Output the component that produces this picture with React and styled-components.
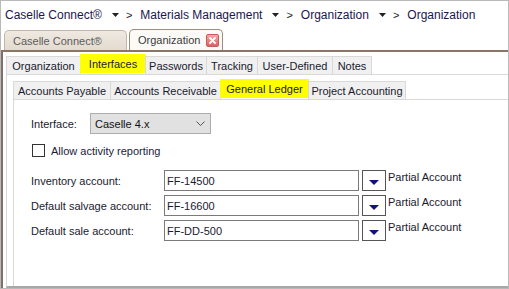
import React from 'react'
import styled, { createGlobalStyle } from 'styled-components'

const GlobalStyle = createGlobalStyle`
  html, body {
    margin: 0;
    padding: 0;
    background: #ffffff;
  }
  body {
    font-family: 'Liberation Sans', Arial, sans-serif;
    font-size: 11px;
    color: #1a1a1a;
  }
  * {
    box-sizing: border-box;
  }
`

const Frame = styled.div`
  width: 509px;
  height: 289px;
  border: 1px solid #b9b9b9;
  display: flex;
  flex-direction: column;
  background: #ffffff;
  overflow: hidden;
`

const Crumbs = styled.nav`
  height: 28px;
  flex: none;
  display: flex;
  align-items: center;
  padding-left: 4px;
  font-size: 12px;
  color: #1b1650;
`

const Crumb = styled.span`
  white-space: nowrap;
`

const Sep = styled.span`
  display: flex;
  align-items: center;
  gap: 7px;
  margin: 0 8px 0 10px;
  font-size: 11px;
  color: #222;
  svg {
    display: block;
  }
`

const DocTabs = styled.div`
  height: 21px;
  flex: none;
  display: flex;
  align-items: flex-end;
  gap: 2px;
  padding-left: 3px;
`

const DocTab = styled.div`
  height: ${(p) => (p.$active ? '21px' : '20px')};
  padding: 0 ${(p) => (p.$active ? '3px' : '8px')} 0 8px;
  display: flex;
  align-items: center;
  border: 1px solid ${(p) => (p.$active ? '#9c8c7c' : '#c2b6a8')};
  border-bottom: none;
  border-radius: 5px 5px 0 0;
  background: ${(p) =>
    p.$active ? '#fbfaf7' : 'linear-gradient(#efe9e1, #e3dbcf)'};
  color: ${(p) => (p.$active ? '#3a3a3a' : '#5c5c5c')};
  width: ${(p) => p.$w}px;
  white-space: nowrap;
`

const CloseBox = styled.span`
  width: 13px;
  height: 13px;
  border-radius: 2px;
  background: linear-gradient(#f2a6a6, #e06262);
  border: 1px solid #c65b5b;
  display: flex;
  align-items: center;
  justify-content: center;
  margin-left: auto;
`

const DocBody = styled.div`
  flex: 1;
  display: flex;
  flex-direction: column;
  border-top: 2px solid #8a7567;
  border-left: 2px solid #7f7069;
  padding: 2px 0 0 3px;
  min-height: 0;
`

const TabStrip = styled.div`
  display: flex;
  align-items: flex-end;
  height: ${(p) => p.$h}px;
  flex: none;
  border-bottom: 1px solid #d9d9d9;
`

const Tab = styled.div`
  height: ${(p) => (p.$active ? '19px' : '18px')};
  margin-bottom: ${(p) => (p.$active ? '1px' : '0')};
  display: flex;
  align-items: center;
  justify-content: center;
  width: ${(p) => p.$w}px;
  background: ${(p) => (p.$active ? '#ffff00' : '#f0f0f0')};
  border: 1px solid ${(p) => (p.$active ? '#ffff00' : '#d9d9d9')};
  border-bottom: none;
  margin-right: -1px;
  white-space: nowrap;
  color: #1a1a2e;
`

const Panel = styled.div`
  flex: 1;
  display: flex;
  flex-direction: column;
  border-left: 1px solid #d9d9d9;
  border-bottom: 2px solid #a8a8a8;
  padding: 6px 0 0 6px;
  min-height: 0;
`

const Content = styled.div`
  flex: 1;
  border-left: 1px solid #d9d9d9;
  padding: 13px 0 0 17px;
`

const Row = styled.div`
  display: flex;
  align-items: center;
  height: 21px;
  margin-bottom: 4px;
`

const Label = styled.span`
  width: ${(p) => p.$w}px;
  flex: none;
  color: #1a1a2e;
`

const Select = styled.div`
  width: 121px;
  height: 21px;
  border: 1px solid #adadad;
  background: #e1e1e1;
  display: flex;
  align-items: center;
  justify-content: space-between;
  padding: 0 5px 0 4px;
  color: #111;
`

const CheckRow = styled.label`
  display: flex;
  align-items: center;
  gap: 6px;
  margin: 10px 0 13px 1px;
  color: #1a1a3a;
`

const Check = styled.span`
  width: 13px;
  height: 13px;
  border: 1px solid #333;
  background: #fff;
`

const Input = styled.div`
  width: 195px;
  height: 21px;
  border: 1px solid #7a7a7a;
  display: flex;
  align-items: center;
  padding-left: 2px;
  color: #1a1a2e;
`

const DropBtn = styled.div`
  width: 24px;
  height: 21px;
  margin-left: 3px;
  border: 1px solid #555;
  display: flex;
  align-items: center;
  justify-content: center;
  padding-top: 4px;
  background: #fff;
`

const Hint = styled.span`
  align-self: flex-start;
  margin-left: 2px;
  margin-top: 1px;
  color: #1a1a2e;
`

const Caret = () => (
  <svg width='7' height='4' viewBox='0 0 7 4'>
    <path d='M0 0h7L3.5 4z' fill='#222' />
  </svg>
)

const accounts = [
  { label: 'Inventory account:', value: 'FF-14500' },
  { label: 'Default salvage account:', value: 'FF-16600' },
  { label: 'Default sale account:', value: 'FF-DD-500' },
]

const App = () => {
  return (
    <>
      <GlobalStyle />
      <Frame>
        <Crumbs>
          <Crumb>Caselle Connect®</Crumb>
          <Sep>
            <Caret />
            &gt;
          </Sep>
          <Crumb>Materials Management</Crumb>
          <Sep>
            <Caret />
            &gt;
          </Sep>
          <Crumb>Organization</Crumb>
          <Sep>
            <Caret />
            &gt;
          </Sep>
          <Crumb>Organization</Crumb>
        </Crumbs>
        <DocTabs>
          <DocTab $w={123}>Caselle Connect®</DocTab>
          <DocTab $active $w={94}>
            Organization
            <CloseBox>
              <svg width='7' height='7' viewBox='0 0 7 7'>
                <path
                  d='M1 1l5 5M6 1L1 6'
                  stroke='#fff'
                  strokeWidth='1.8'
                  strokeLinecap='round'
                />
              </svg>
            </CloseBox>
          </DocTab>
        </DocTabs>
        <DocBody>
          <TabStrip $h={21}>
            <Tab $w={75}>Organization</Tab>
            <Tab $active $w={66}>Interfaces</Tab>
            <Tab $w={62}>Passwords</Tab>
            <Tab $w={52}>Tracking</Tab>
            <Tab $w={76}>User-Defined</Tab>
            <Tab $w={40}>Notes</Tab>
          </TabStrip>
          <Panel>
            <TabStrip $h={19}>
              <Tab $w={98}>Accounts Payable</Tab>
              <Tab $w={111}>Accounts Receivable</Tab>
              <Tab $active $w={89}>General Ledger</Tab>
              <Tab $w={98}>Project Accounting</Tab>
            </TabStrip>
            <Content>
              <Row>
                <Label $w={59}>Interface:</Label>
                <Select>
                  Caselle 4.x
                  <svg width='9' height='5' viewBox='0 0 9 5'>
                    <path d='M0.5 0.5l4 4 4-4' fill='none' stroke='#555' />
                  </svg>
                </Select>
              </Row>
              <CheckRow>
                <Check />
                Allow activity reporting
              </CheckRow>
              {accounts.map((a) => (
                <Row key={a.label}>
                  <Label $w={133}>{a.label}</Label>
                  <Input>{a.value}</Input>
                  <DropBtn>
                    <svg width='10' height='5' viewBox='0 0 10 5'>
                      <path d='M0 0h10L5 5z' fill='#12127a' />
                    </svg>
                  </DropBtn>
                  <Hint>Partial Account</Hint>
                </Row>
              ))}
            </Content>
          </Panel>
        </DocBody>
      </Frame>
    </>
  )
}

export default App
